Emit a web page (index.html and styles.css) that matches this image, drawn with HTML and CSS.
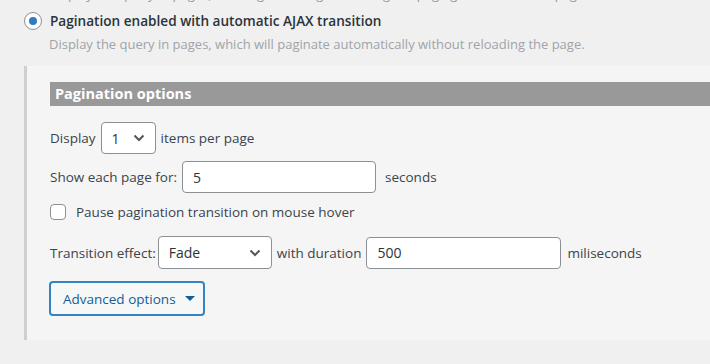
FILE: index.html
```html
<!DOCTYPE html>
<html>
<head>
<meta charset="utf-8">
<link rel="stylesheet" href="styles.css">
</head>
<body>
<div class="prev-desc">Display the query in pages, with regular navigation using the paging links below the page.</div>
<label class="option">
  <span class="radio"><span class="dot"></span></span>
  <span class="option-title">Pagination enabled with automatic AJAX transition</span>
</label>
<p class="desc">Display the query in pages, which will paginate automatically without reloading the page.</p>

<div class="panel">
  <div class="panel-head">Pagination options</div>
  <div class="row row-display">
    <span class="lbl">Display</span>
    <span class="select select-num"><span class="val">1</span><svg class="chev" viewBox="0 0 12 8" width="12" height="8"><path d="M1.5 1.5 L6 6 L10.5 1.5" fill="none" stroke="#50575e" stroke-width="2"/></svg></span>
    <span class="lbl">items per page</span>
  </div>
  <div class="row row-show">
    <span class="lbl">Show each page for:</span>
    <span class="input input-sec"><span class="val">5</span></span>
    <span class="lbl">seconds</span>
  </div>
  <label class="row row-check">
    <span class="checkbox"></span>
    <span class="lbl">Pause pagination transition on mouse hover</span>
  </label>
  <div class="row row-trans">
    <span class="lbl">Transition effect:</span>
    <span class="select select-fx"><span class="val">Fade</span><svg class="chev" viewBox="0 0 12 8" width="12" height="8"><path d="M1.5 1.5 L6 6 L10.5 1.5" fill="none" stroke="#50575e" stroke-width="2"/></svg></span>
    <span class="lbl">with duration</span>
    <span class="input input-ms"><span class="val">500</span></span>
    <span class="lbl">miliseconds</span>
  </div>
  <div class="row row-btn">
    <button class="btn">Advanced options <svg class="caret" viewBox="0 0 10 6" width="10" height="6"><path d="M0 0 H10 L5 5 Z" fill="#135e96"/></svg></button>
  </div>
</div>
</body>
</html>
```

FILE: styles.css
```css
* { box-sizing: border-box; }
html, body { margin: 0; padding: 0; }
body {
  background: #f0f0f0;
  font-family: "Open Sans", "Noto Sans", sans-serif;
  font-size: 13.5px;
  color: #3c434a;
  height: 364px;
  overflow: hidden;
}
.prev-desc {
  color: #999;
  font-size: 13px;
  line-height: 20px;
  height: 4px;
  overflow: hidden;
  margin-left: 49px;
  display: flex;
  align-items: flex-end;
  white-space: nowrap;
}
.option {
  display: flex;
  align-items: center;
  margin-top: 7px;
  margin-left: 24px;
  height: 19px;
}
.radio {
  width: 18px;
  height: 18px;
  border: 1px solid #8c8f94;
  border-radius: 50%;
  background: #fff;
  display: flex;
  align-items: center;
  justify-content: center;
  flex: none;
}
.dot {
  width: 8px;
  height: 8px;
  border-radius: 50%;
  background: #2f7bc4;
}
.option-title {
  margin-left: 8px;
  font-weight: 600;
  font-size: 13.6px;
  color: #2c3338;
}
.desc {
  margin: 4px 0 0 49px;
  color: #a0a4a8;
  font-size: 13px;
  line-height: 20px;
}
.panel {
  margin: 12px 0 0 24px;
  border-left: 3px solid #cfcfcf;
  background: #f5f5f5;
  padding: 16px 0 24px 23px;
}
.panel-head {
  background: #999;
  color: #fff;
  font-weight: 700;
  font-size: 14.5px;
  height: 24px;
  line-height: 24px;
  padding-left: 5px;
}
.row {
  display: flex;
  align-items: center;
}
.row-display { margin-top: 16px; height: 32px; }
.row-show { margin-top: 7px; height: 32px; }
.row-check { margin-top: 11px; height: 16px; }
.row-trans { margin-top: 16px; height: 33px; }
.row-btn { margin-top: 12px; }
.select, .input {
  display: flex;
  align-items: center;
  height: 32px;
  background: #fff;
  border: 1px solid #8c8f94;
  border-radius: 4px;
  font-size: 14px;
  color: #2c3338;
  padding-left: 10px;
  flex: none;
}
.select { justify-content: space-between; padding-right: 10px; }
.select-num { width: 55px; margin: 0 5px 0 5px; }
.select-fx { width: 114px; height: 33px; margin: 0 5px 0 2px; }
.input-sec { width: 194px; margin: 0 9px 0 5px; }
.input-ms { width: 195px; margin: 0 6px 0 5px; }
.checkbox {
  width: 16px;
  height: 16px;
  border: 1px solid #8c8f94;
  border-radius: 4px;
  background: #fff;
  flex: none;
  margin-right: 10px;
}
.btn {
  display: flex;
  align-items: center;
  flex: none;
  gap: 9px;
  height: 35px;
  width: 156px;
  margin-left: -1px;
  padding: 0 0 0 12px;
  border: 2px solid #3582c4;
  border-radius: 4px;
  background: #f6f7f7;
  color: #135e96;
  font-family: inherit;
  font-size: 13.5px;
}
```
